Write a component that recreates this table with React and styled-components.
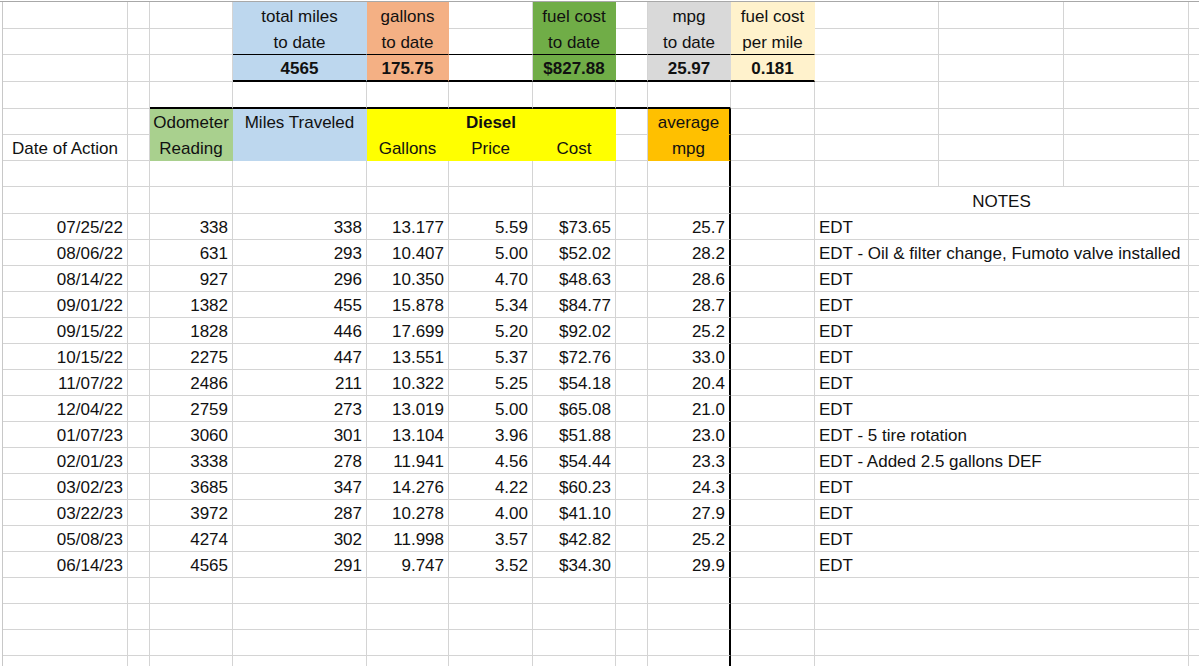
import React from 'react';
import styled, { createGlobalStyle } from 'styled-components';

// widths include the 1px gridline on the right of each column
const COLS = [125, 22, 83, 134, 82, 84, 83, 32, 83, 84, 124, 125, 125, 125];
const LETTERS = 'ABCDEFGHIJKLMN'.split('');
const GRID = '#d4d4d4';

const fills = {
    blue: '#bdd7ee',
    peach: '#f4b084',
    green: '#70ad47',
    grey: '#d9d9d9',
    cream: '#fff2cc',
    mint: '#a9d08e',
    yellow: '#ffff00',
    amber: '#ffc000',
};

const log = [
    ['07/25/22', '338', '338', '13.177', '5.59', '$73.65', '25.7', 'EDT'],
    ['08/06/22', '631', '293', '10.407', '5.00', '$52.02', '28.2', 'EDT - Oil & filter change, Fumoto valve installed'],
    ['08/14/22', '927', '296', '10.350', '4.70', '$48.63', '28.6', 'EDT'],
    ['09/01/22', '1382', '455', '15.878', '5.34', '$84.77', '28.7', 'EDT'],
    ['09/15/22', '1828', '446', '17.699', '5.20', '$92.02', '25.2', 'EDT'],
    ['10/15/22', '2275', '447', '13.551', '5.37', '$72.76', '33.0', 'EDT'],
    ['11/07/22', '2486', '211', '10.322', '5.25', '$54.18', '20.4', 'EDT'],
    ['12/04/22', '2759', '273', '13.019', '5.00', '$65.08', '21.0', 'EDT'],
    ['01/07/23', '3060', '301', '13.104', '3.96', '$51.88', '23.0', 'EDT - 5 tire rotation'],
    ['02/01/23', '3338', '278', '11.941', '4.56', '$54.44', '23.3', 'EDT - Added 2.5 gallons DEF'],
    ['03/02/23', '3685', '347', '14.276', '4.22', '$60.23', '24.3', 'EDT'],
    ['03/22/23', '3972', '287', '10.278', '4.00', '$41.10', '27.9', 'EDT'],
    ['05/08/23', '4274', '302', '11.998', '3.57', '$42.82', '25.2', 'EDT'],
    ['06/14/23', '4565', '291', '9.747', '3.52', '$34.30', '29.9', 'EDT'],
];

const between = (col, from, to) =>
    LETTERS.indexOf(col) >= LETTERS.indexOf(from) &&
    LETTERS.indexOf(col) <= LETTERS.indexOf(to);

// turns a row description into the list of cells drawn on that row
function buildRow({ h = 26, cells = {}, notes = false, rule = false, under }) {
    const out = [];
    let i = 0;
    while (i < LETTERS.length) {
        const col = LETTERS[i];
        const c = cells[col] || {};
        const span = c.span || (notes && col === 'K' ? 3 : 1);
        out.push({
            key: col,
            span,
            text: c.t || '',
            align: c.a || (notes && col === 'K' ? 'l' : 'r'),
            bold: c.b,
            fill: c.f ? fills[c.f] : null,
            under: under && between(col, under.from, under.to) ? under.weight : null,
            rule: rule && col === 'I',
        });
        i += span;
    }
    return { h, cells: out };
}

const head = (t, f, extra = {}) => ({ t, f, a: 'c', ...extra });

const rows = [
    buildRow({
        h: 27,
        cells: {
            D: head('total miles', 'blue'),
            E: head('gallons', 'peach'),
            G: head('fuel cost', 'green'),
            I: head('mpg', 'grey'),
            J: head('fuel cost', 'cream'),
        },
    }),
    buildRow({
        cells: {
            D: head('to date', 'blue'),
            E: head('to date', 'peach'),
            G: head('to date', 'green'),
            I: head('to date', 'grey'),
            J: head('per mile', 'cream'),
        },
        under: { from: 'D', to: 'J', weight: 'thin' },
    }),
    buildRow({
        h: 27,
        cells: {
            D: head('4565', 'blue', { b: true }),
            E: head('175.75', 'peach', { b: true }),
            G: head('$827.88', 'green', { b: true }),
            I: head('25.97', 'grey', { b: true }),
            J: head('0.181', 'cream', { b: true }),
        },
        under: { from: 'D', to: 'J', weight: 'thick' },
    }),
    buildRow({ h: 27, under: { from: 'C', to: 'I', weight: 'thick' } }),
    buildRow({
        rule: true,
        cells: {
            C: head('Odometer', 'mint'),
            D: head('Miles Traveled', 'blue'),
            E: head('Diesel', 'yellow', { b: true, span: 3 }),
            I: head('average', 'amber'),
        },
    }),
    buildRow({
        rule: true,
        cells: {
            A: head('Date of Action'),
            C: head('Reading', 'mint'),
            D: head('', 'blue'),
            E: head('Gallons', 'yellow'),
            F: head('Price', 'yellow'),
            G: head('Cost', 'yellow'),
            I: head('mpg', 'amber'),
        },
    }),
    buildRow({ rule: true }),
    buildRow({ h: 27, rule: true, notes: true, cells: { K: head('NOTES', null, { span: 3 }) } }),
    ...log.map(([date, odo, miles, gal, price, cost, mpg, note]) =>
        buildRow({
            rule: true,
            notes: true,
            cells: {
                A: { t: date },
                C: { t: odo },
                D: { t: miles },
                E: { t: gal },
                F: { t: price },
                G: { t: cost },
                I: { t: mpg },
                K: { t: note, a: 'l', span: 3 },
            },
        })
    ),
    ...Array.from({ length: 4 }, () => buildRow({ rule: true, notes: true })),
];

export default function App() {
    return (
        <>
            <GlobalStyle />
            <Page>
                <Sheet>
                    {rows.map((row, r) => (
                        <Row key={r} $h={row.h}>
                            {row.cells.map((c) => (
                                <Cell
                                    key={c.key}
                                    $span={c.span}
                                    $align={c.align}
                                    $bold={c.bold}
                                    $fill={c.fill}
                                    $under={c.under}
                                    $rule={c.rule}
                                >
                                    {c.text}
                                </Cell>
                            ))}
                        </Row>
                    ))}
                </Sheet>
            </Page>
        </>
    );
}

const GlobalStyle = createGlobalStyle`
    html, body {
        margin: 0;
        padding: 0;
        background: #fff;
        overflow: hidden;
    }
    body {
        font-family: 'Liberation Sans', Arial, sans-serif;
        font-size: 17px;
        color: #111;
    }
`;

const Page = styled.div`
    width: 1199px;
    height: 665px;
    margin-top: 1px;
    border-top: 1px solid #a8a8a8;
    padding-left: 2px;
    box-sizing: border-box;
    overflow: hidden;
`;

const Sheet = styled.div`
    display: flex;
    flex-direction: column;
    border-left: 1px solid #c8c8c8;
`;

const Row = styled.div`
    display: grid;
    grid-template-columns: ${COLS.map((w) => `${w}px`).join(' ')};
    height: ${(p) => p.$h}px;
    flex-shrink: 0;
`;

const edge = (fill) => (fill ? 'transparent' : GRID);

const Cell = styled.div`
    grid-column: span ${(p) => p.$span};
    box-sizing: border-box;
    min-width: 0;
    display: flex;
    align-items: flex-end;
    justify-content: ${(p) =>
        p.$align === 'l' ? 'flex-start' : p.$align === 'c' ? 'center' : 'flex-end'};
    padding: 0 4px 1px 4px;
    line-height: 20px;
    white-space: nowrap;
    font-weight: ${(p) => (p.$bold ? 700 : 400)};
    background: ${(p) => p.$fill || '#fff'};
    border-right: ${(p) => (p.$rule ? '2px solid #000' : `1px solid ${edge(p.$fill)}`)};
    border-bottom: ${(p) =>
        p.$under === 'thick'
            ? '2px solid #000'
            : p.$under === 'thin'
            ? '1px solid #000'
            : `1px solid ${edge(p.$fill)}`};
`;
